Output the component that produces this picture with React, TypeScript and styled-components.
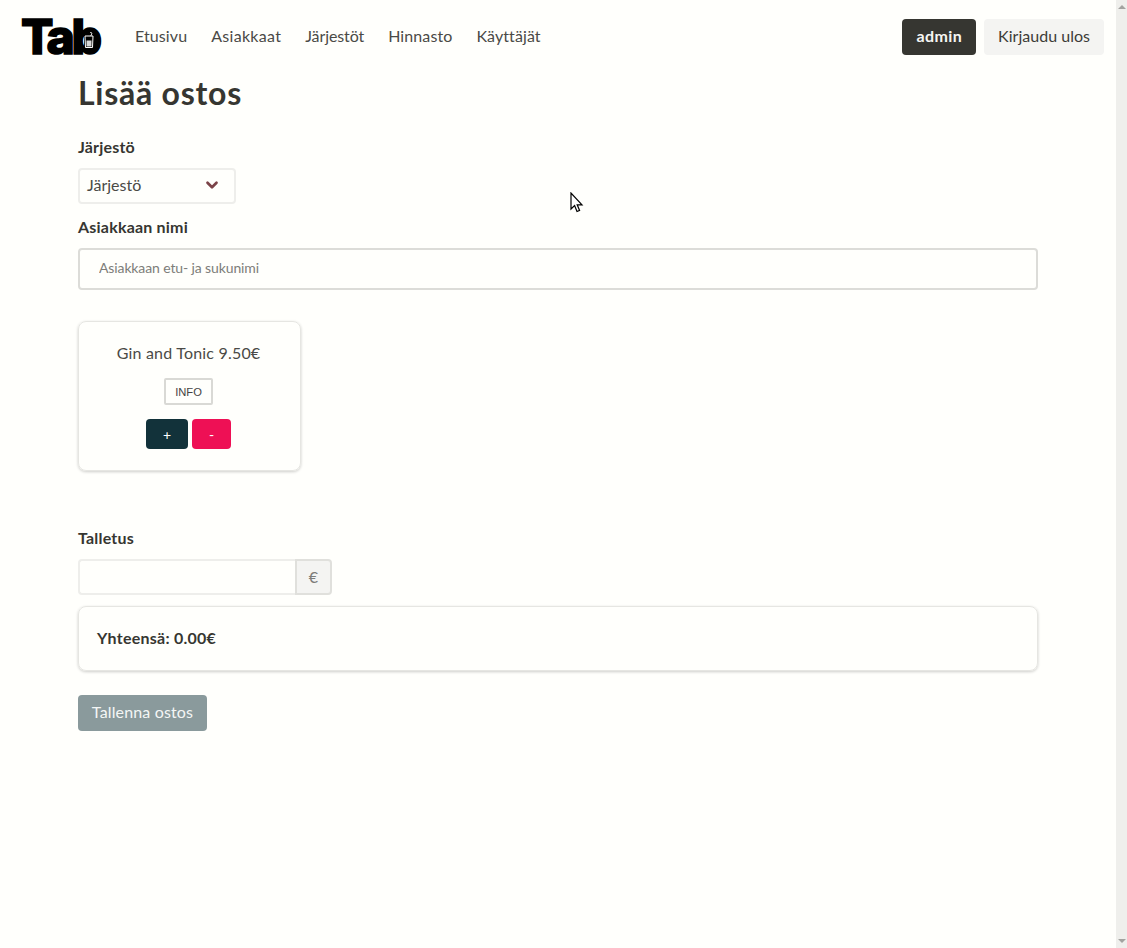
import styled, { createGlobalStyle } from "styled-components";
import { ChevronDown } from "lucide-react";

const Global = createGlobalStyle`
	html, body {
		margin: 0;
		height: 100%;
		overflow: hidden;
		background: #fffffc;
	}
	body {
		font-family: "Lato", "Noto Sans", sans-serif;
		font-size: 16px;
		line-height: 24px;
		color: #4a4a46;
	}
	* { box-sizing: border-box; }
`;

const Page = styled.div`
	display: flex;
	height: 948px;
	position: relative;
`;

const Content = styled.div`
	flex: 1;
	min-width: 0;
`;

const Scrollbar = styled.div`
	width: 11px;
	background: #efefec;
	display: flex;
	flex-direction: column;
	justify-content: space-between;
	align-items: center;
	padding: 5px 0;
`;

const Arrow = styled.span<{ $down?: boolean }>`
	width: 0;
	height: 0;
	border-left: 4px solid transparent;
	border-right: 4px solid transparent;
	${(p) => (p.$down ? "border-top: 4px solid #a3a3a0;" : "border-bottom: 4px solid #a3a3a0;")}
`;

const Navbar = styled.nav`
	display: flex;
	align-items: center;
	height: 73px;
	padding: 0 12px 0 21px;
`;

const Logo = styled.a`
	position: relative;
	display: block;
	width: 80px;
	height: 40px;
	margin-right: 22px;
	font-family: "Inter", sans-serif;
	font-weight: 800;
	font-size: 48px;
	line-height: 40px;
	letter-spacing: -3.4px;
	color: #000;
	-webkit-text-stroke: 1.5px #000;
`;

const LogoGlass = styled.svg`
	position: absolute;
	left: 63px;
	top: 15px;
`;

const NavItem = styled.a<{ $ls?: number }>`
	padding: 0 12px 2px;
	color: #4a4a46;
	letter-spacing: ${(p) => p.$ls ?? 0.1}px;
`;

const NavEnd = styled.div`
	margin-left: auto;
	display: flex;
	gap: 8px;
`;

const NavButton = styled.a<{ $dark?: boolean }>`
	display: flex;
	align-items: center;
	height: 36px;
	padding: 0 14px 2px;
	border-radius: 4px;
	background: ${(p) => (p.$dark ? "#363631" : "#f4f4f2")};
	color: ${(p) => (p.$dark ? "#f6f6f3" : "#3c3c38")};
	font-weight: ${(p) => (p.$dark ? 700 : 400)};
	letter-spacing: ${(p) => (p.$dark ? 0.4 : 0.02)}px;
`;

const Container = styled.main`
	width: 960px;
	margin: 0 auto;
	padding-top: 2px;
`;

const Title = styled.h1`
	margin: 0 0 24px;
	font-size: 32px;
	line-height: 36px;
	font-weight: 700;
	letter-spacing: 0.75px;
	color: #363631;
`;

const Label = styled.label`
	display: block;
	height: 24px;
	margin-bottom: 9px;
	font-weight: 700;
	letter-spacing: 0.2px;
	color: #363631;
`;

const SelectBox = styled.div`
	display: flex;
	align-items: center;
	justify-content: space-between;
	width: 158px;
	height: 36px;
	margin-bottom: 11px;
	padding: 0 13px 2px 7px;
	border: 2px solid #eeeeeb;
	border-radius: 4px;
	color: #4a4a46;

	svg {
		color: #7b4348;
	}
`;

const NameInput = styled.input`
	display: block;
	width: 100%;
	height: 42px;
	padding: 0 19px 3px;
	border: 2px solid #dcdcd8;
	border-radius: 4px;
	background: #fffffc;
	font: 14px "Lato", sans-serif;
	letter-spacing: -0.12px;
	outline: none;

	&::placeholder {
		color: #7d7d79;
		opacity: 1;
	}
`;

const Card = styled.section`
	display: flex;
	flex-direction: column;
	align-items: center;
	width: 223px;
	height: 150px;
	margin: 31px 0 55px;
	padding: 19px 2px 0 0;
	border-radius: 8px;
	border: 1px solid #e6e6e2;
	box-shadow: 0 1px 3px rgba(10, 10, 10, 0.2);
`;

const CardTitle = styled.div`
	height: 24px;
	margin-bottom: 13px;
	letter-spacing: 0.2px;
	color: #4a4a46;
`;

const InfoButton = styled.button`
	width: 49px;
	height: 27px;
	margin-bottom: 14px;
	padding: 0;
	border: 2px solid #d9d9d5;
	border-radius: 2px;
	background: transparent;
	font: 11.2px "Liberation Sans", Arial, sans-serif;
	color: #444;
`;

const CountRow = styled.div`
	display: flex;
	gap: 4px;
`;

const CountButton = styled.button<{ $color: string; $w: number }>`
	width: ${(p) => p.$w}px;
	height: 30px;
	padding: 0;
	border: 0;
	border-radius: 4px;
	background: ${(p) => p.$color};
	color: #fff;
	font: 14px "Lato", sans-serif;
`;

const AddonRow = styled.div`
	display: flex;
	width: 254px;
	height: 36px;
	margin-bottom: 11px;
`;

const DepositInput = styled.input`
	flex: 1;
	min-width: 0;
	border: 2px solid #eeeeeb;
	border-right: 0;
	border-radius: 4px 0 0 4px;
	background: #fffffc;
	outline: none;
`;

const Addon = styled.span`
	display: flex;
	align-items: center;
	justify-content: center;
	width: 37px;
	padding-bottom: 1px;
	border: 2px solid #e0e0dc;
	border-radius: 0 4px 4px 0;
	background: #f4f4f2;
	color: #7d7d79;
`;

const TotalBox = styled.div`
	display: flex;
	align-items: center;
	height: 65px;
	margin-bottom: 24px;
	padding: 0 18px 2px;
	border: 1px solid #e6e6e2;
	border-radius: 8px;
	box-shadow: 0 1px 3px rgba(10, 10, 10, 0.2);
	font-weight: 700;
	letter-spacing: 0.25px;
	color: #363631;
`;

const SaveButton = styled.button`
	display: block;
	width: 129px;
	height: 36px;
	padding: 0 0 3px;
	border: 0;
	border-radius: 4px;
	background: #8a9a9c;
	color: #f4f6f5;
	font: 16px "Lato", sans-serif;
	letter-spacing: 0.15px;
`;

const Pointer = styled.svg`
	position: absolute;
	left: 570px;
	top: 192px;
`;

export default function App() {
	return (
		<Page>
			<Global />
			<Content>
				<Navbar>
					<Logo>
						Tab
						<LogoGlass width="10" height="17" viewBox="0 0 10 17">
							<rect x="0" y="1" width="10" height="16" fill="#000" />
							<path d="M6 0 L8 1.2 L6.8 4" stroke="#fff" strokeWidth="0.9" fill="none" />
							<path d="M1 4 H9 L8.5 15.5 H1.5 Z" stroke="#fff" strokeWidth="1" fill="#000" />
							<rect x="2.5" y="8.5" width="5" height="6" fill="#d8d8d8" />
						</LogoGlass>
					</Logo>
					<NavItem>Etusivu</NavItem>
					<NavItem $ls={0.3}>Asiakkaat</NavItem>
					<NavItem $ls={-0.1}>Järjestöt</NavItem>
					<NavItem>Hinnasto</NavItem>
					<NavItem>Käyttäjät</NavItem>
					<NavEnd>
						<NavButton $dark>admin</NavButton>
						<NavButton>Kirjaudu ulos</NavButton>
					</NavEnd>
				</Navbar>
				<Container>
					<Title>Lisää ostos</Title>
					<Label>Järjestö</Label>
					<SelectBox>
						Järjestö
						<ChevronDown size={18} strokeWidth={3.6} />
					</SelectBox>
					<Label>Asiakkaan nimi</Label>
					<NameInput placeholder="Asiakkaan etu- ja sukunimi" />
					<Card>
						<CardTitle>Gin and Tonic 9.50€</CardTitle>
						<InfoButton>INFO</InfoButton>
						<CountRow>
							<CountButton $color="#12323a" $w={42}>+</CountButton>
							<CountButton $color="#ee1055" $w={39}>-</CountButton>
						</CountRow>
					</Card>
					<Label>Talletus</Label>
					<AddonRow>
						<DepositInput />
						<Addon>€</Addon>
					</AddonRow>
					<TotalBox>Yhteensä: 0.00€</TotalBox>
					<SaveButton>Tallenna ostos</SaveButton>
				</Container>
			</Content>
			<Scrollbar>
				<Arrow />
				<Arrow $down />
			</Scrollbar>
			<Pointer width="14" height="22" viewBox="0 0 14 22">
				<path d="M1 1 V17 L4.6 13.6 L7 19.5 L9.6 18.4 L7.2 12.8 H12 Z" fill="#fff" stroke="#000" strokeWidth="1.2" />
			</Pointer>
		</Page>
	);
}
